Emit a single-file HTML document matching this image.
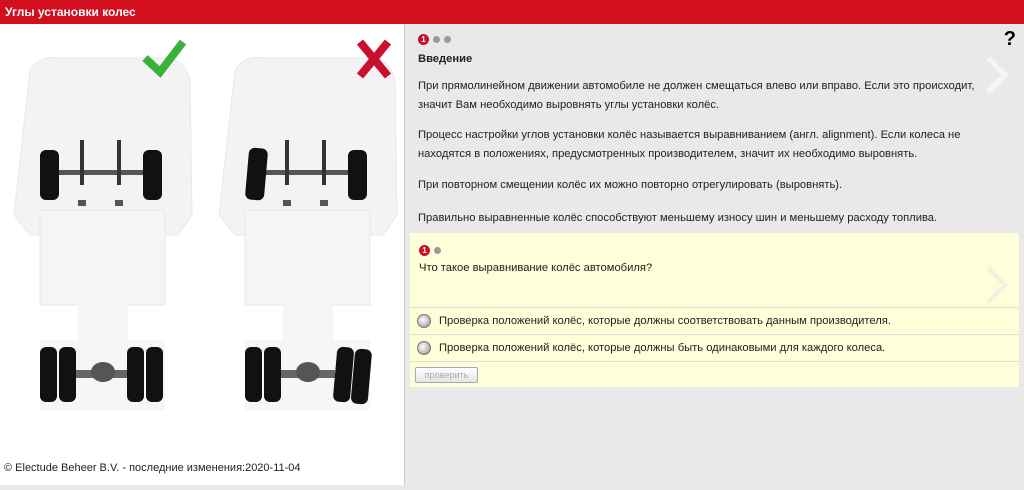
<!DOCTYPE html><html><head><meta charset="utf-8"><style>
body{margin:0;width:1024px;height:485px;overflow:hidden;font-family:"Liberation Sans",Arial,sans-serif;background:#e9e9e9;position:relative}
.hdr{position:absolute;left:0;top:0;width:1024px;height:24px;background:#d20f1e;color:#fff;font-weight:bold;font-size:12px;line-height:24px;padding-left:5px;box-sizing:border-box}
.left{position:absolute;left:0;top:24px;width:404px;height:461px;background:#fff;border-right:1px solid #ccc}
.foot{position:absolute;left:4px;top:462px;font-size:11px;color:#222}
.txt{position:absolute;left:418px;font-size:11.2px;color:#222;line-height:19px}
.num{display:inline-block;width:11px;height:11px;border-radius:50%;background:#c8102e;color:#fff;font-size:8px;font-weight:bold;text-align:center;line-height:11px;vertical-align:middle}
.dot{display:inline-block;width:7px;height:7px;border-radius:50%;background:#999;margin-left:4px;vertical-align:middle}
.q{position:absolute;left:410px;top:233px;width:609px;height:154px;background:#fefed8}
.opt{position:absolute;left:0;width:609px;border-top:1px solid #ddd;font-size:11.2px;color:#222}
.rad{display:inline-block;width:14px;height:14px;border-radius:50%;background:radial-gradient(circle at 40% 40%,#fff,#bbb 60%,#777);border:1px solid #777;vertical-align:middle;margin:0 8px 0 7px;box-sizing:border-box}
.btn{position:absolute;left:5px;top:134px;width:61px;height:14px;border:1px solid #aaa;border-radius:2px;background:linear-gradient(#fff,#e4e4e4);font-size:9px;color:#aaa;text-align:center;line-height:14px}
</style></head><body>
<div class="hdr">Углы установки колес</div>
<div class="left">
<svg width="404" height="461" viewBox="0 24 404 461">
<g id="t">
<path d="M30 70 Q40 55 60 58 L170 58 Q185 62 190 80 L192 215 L178 235 L30 235 L14 215 Z" fill="#f3f3f3" stroke="#e8e8e8"/>
<rect x="40" y="210" width="125" height="95" fill="#f5f5f5" stroke="#e8e8e8"/>
<rect x="78" y="300" width="50" height="45" fill="#f5f5f5"/>
<rect x="40" y="340" width="125" height="70" fill="#f6f6f6"/>
<rect x="56" y="170" width="92" height="5" fill="#555"/>
<rect x="80" y="140" width="4" height="45" fill="#333"/><rect x="117" y="140" width="4" height="45" fill="#333"/>
<rect x="78" y="200" width="8" height="6" fill="#555"/><rect x="115" y="200" width="8" height="6" fill="#555"/>
<rect x="70" y="370" width="60" height="8" fill="#666"/>
<ellipse cx="103" cy="372" rx="12" ry="10" fill="#555"/>
</g>
<use href="#t" x="205"/>
<rect x="40" y="150" width="19" height="50" rx="6" fill="#111"/><rect x="143" y="150" width="19" height="50" rx="6" fill="#111"/>
<rect x="40" y="347" width="17" height="55" rx="6" fill="#111"/><rect x="59" y="347" width="17" height="55" rx="6" fill="#111"/>
<rect x="127" y="347" width="17" height="55" rx="6" fill="#111"/><rect x="146" y="347" width="17" height="55" rx="6" fill="#111"/>
<rect x="247" y="148" width="19" height="52" rx="6" fill="#111" transform="rotate(5 256 174)"/><rect x="348" y="150" width="19" height="50" rx="6" fill="#111"/>
<rect x="245" y="347" width="17" height="55" rx="6" fill="#111"/><rect x="264" y="347" width="17" height="55" rx="6" fill="#111"/>
<rect x="335" y="347" width="17" height="55" rx="6" fill="#111" transform="rotate(5 343 375)"/><rect x="353" y="349" width="17" height="55" rx="6" fill="#111" transform="rotate(5 361 375)"/>
<path d="M145 58 L160 72 L183 42" fill="none" stroke="#3bb03b" stroke-width="8"/>
<path d="M360 42 L388 76 M388 42 L360 76" stroke="#c8102e" stroke-width="8"/>
</svg>
</div>
<div class="foot">© Electude Beheer B.V. - последние изменения:2020-11-04</div>
<div style="position:absolute;left:418px;top:31px"><span class="num">1</span><span class="dot"></span><span class="dot"></span></div>
<div style="position:absolute;right:8px;top:28px;font-size:20px;font-weight:bold">?</div>
<svg style="position:absolute;left:985px;top:55px" width="25" height="40"><path d="M3 3 L20 20 L3 37" fill="none" stroke="#f6f6f6" stroke-width="5"/></svg>
<div class="txt" style="top:50px;font-weight:bold">Введение</div>
<div class="txt" style="top:77px">При прямолинейном движении автомобиле не должен смещаться влево или вправо. Если это происходит,<br>значит Вам необходимо выровнять углы установки колёс.</div>
<div class="txt" style="top:126px">Процесс настройки углов установки колёс называется выравниванием (англ. alignment). Если колеса не<br>находятся в положениях, предусмотренных производителем, значит их необходимо выровнять.</div>
<div class="txt" style="top:176px">При повторном смещении колёс их можно повторно отрегулировать (выровнять).</div>
<div class="txt" style="top:209px">Правильно выравненные колёс способствуют меньшему износу шин и меньшему расходу топлива.</div>
<div class="q">
<div style="position:absolute;left:9px;top:9px"><span class="num">1</span><span class="dot"></span></div>
<div style="position:absolute;left:9px;top:29px;font-size:11.2px;color:#222">Что такое выравнивание колёс автомобиля?</div>
<svg style="position:absolute;left:575px;top:32px" width="25" height="40"><path d="M3 3 L20 20 L3 37" fill="none" stroke="#f0f0e0" stroke-width="4"/></svg>
<div class="opt" style="top:74px;height:26px;line-height:26px"><span class="rad"></span>Проверка положений колёс, которые должны соответствовать данным производителя.</div>
<div class="opt" style="top:101px;height:26px;line-height:26px;border-bottom:1px solid #ddd"><span class="rad"></span>Проверка положений колёс, которые должны быть одинаковыми для каждого колеса.</div>
<div class="btn">проверить</div>
</div>
</body></html>
